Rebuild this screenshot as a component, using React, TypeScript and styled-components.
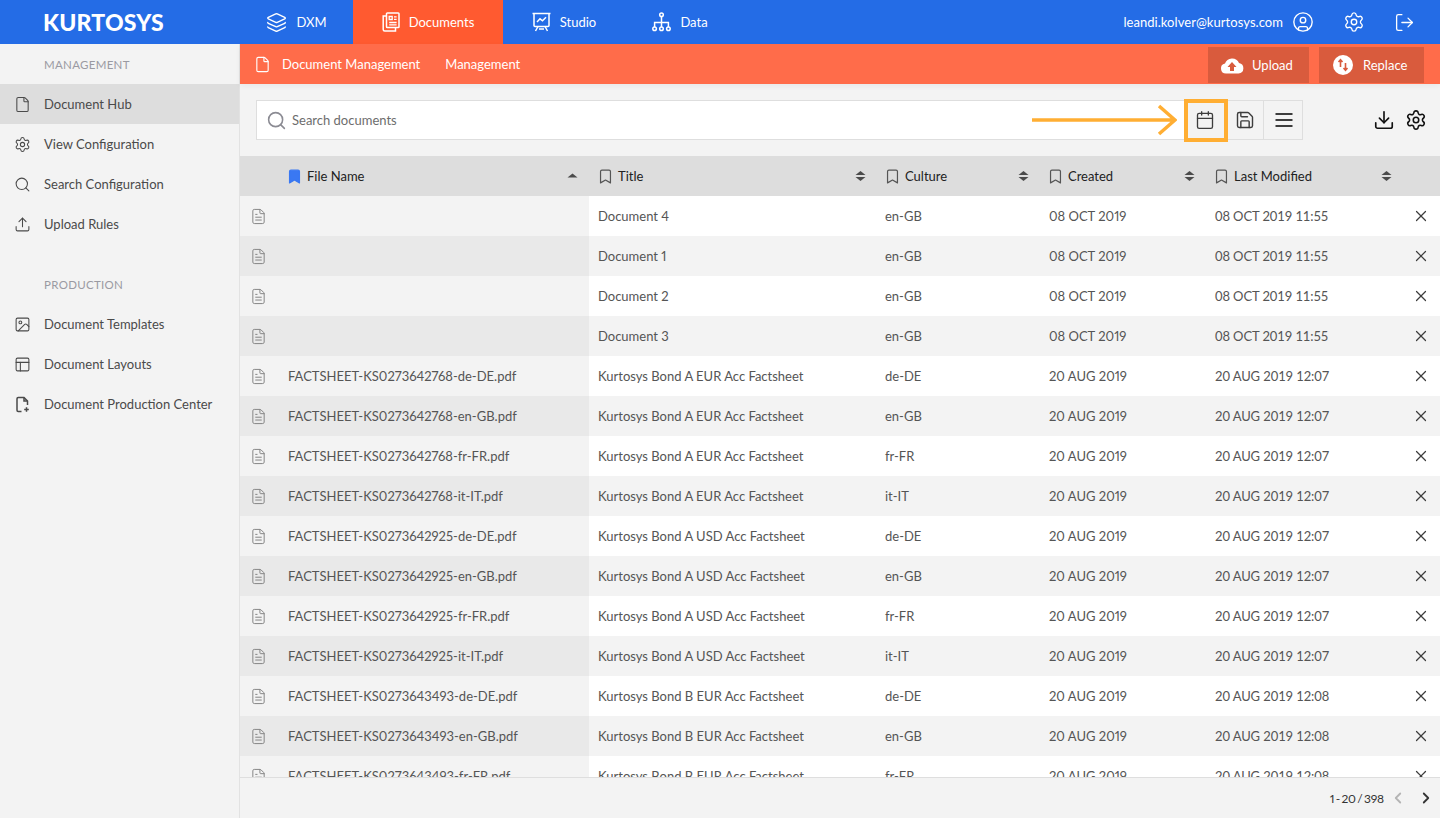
import styled, { createGlobalStyle } from "styled-components";
import {
  Bookmark,
  Calendar,
  ChevronLeft,
  ChevronRight,
  CircleUser,
  Download,
  File,
  FileText,
  Image,
  Layers,
  LogOut,
  PanelsTopLeft,
  Save,
  Search,
  Settings,
  Upload,
  X,
} from "lucide-react";

const GlobalStyle = createGlobalStyle`
  html, body, #root {
    margin: 0;
    height: 100%;
  }
  body {
    font-family: Lato, "Liberation Sans", sans-serif;
    font-size: 13px;
    font-variant-numeric: proportional-nums;
    overflow: hidden;
    background: #f3f3f3;
  }
  * {
    box-sizing: border-box;
  }
`;

const Page = styled.div`
  display: flex;
  flex-direction: column;
  height: 818px;
`;

const TopBar = styled.header`
  display: flex;
  align-items: center;
  height: 44px;
  flex-shrink: 0;
  background: #246ce6;
  color: #fff;
`;

const Logo = styled.div`
  width: 240px;
  padding-left: 43px;
  font-size: 23px;
  font-weight: 900;
  letter-spacing: 0.2px;
`;

const TopNav = styled.nav`
  display: flex;
  height: 100%;
`;

const TopNavItem = styled.div<{ $active?: boolean; $width: number }>`
  display: flex;
  align-items: center;
  justify-content: center;
  gap: 9px;
  width: ${(p) => p.$width}px;
  background: ${(p) => (p.$active ? "#ff5a30" : "transparent")};
`;

const UserArea = styled.div`
  display: flex;
  align-items: center;
  margin-left: auto;
  padding-right: 25px;
`;

const UserMail = styled.span`
  margin-right: 9px;
  letter-spacing: 0.05px;
`;

const UserIcons = styled.div`
  display: flex;
  align-items: center;
  gap: 29px;
`;

const Body = styled.div`
  display: flex;
  flex: 1;
  min-height: 0;
`;

const Sidebar = styled.aside`
  width: 240px;
  flex-shrink: 0;
  background: #f3f3f3;
  border-right: 1px solid #e2e2e2;
  color: #4a4a4a;
`;

const SideHeading = styled.div`
  height: 40px;
  padding-left: 44px;
  display: flex;
  align-items: center;
  font-size: 11.5px;
  letter-spacing: 0.3px;
  color: #9a9aa2;
`;

const SideGroup = styled.div`
  margin-bottom: 20px;
`;

const SideItem = styled.div<{ $active?: boolean }>`
  display: flex;
  align-items: center;
  height: 40px;
  padding-left: 14px;
  gap: 13px;
  background: ${(p) => (p.$active ? "#dddddd" : "transparent")};
`;

const Main = styled.main`
  flex: 1;
  min-width: 0;
  display: flex;
  flex-direction: column;
`;

const SubHeader = styled.div`
  position: relative;
  display: flex;
  align-items: center;
  height: 40px;
  flex-shrink: 0;
  padding: 0 16px 0 14px;
  background: #ff6c4a;
  color: #fff;
  box-shadow: 0 2px 6px rgba(0, 0, 0, 0.05);
`;

const SubLink = styled.span`
  margin-left: 25px;
  &:first-of-type {
    margin-left: 11px;
  }
`;

const SubActions = styled.div`
  display: flex;
  gap: 10px;
  margin-left: auto;
`;

const ActionButton = styled.button<{ $width: number; $pad: number }>`
  display: flex;
  align-items: center;
  gap: 8px;
  width: ${(p) => p.$width}px;
  height: 36px;
  margin-top: 2px;
  border: 0;
  padding: 0 0 0 ${(p) => p.$pad}px;
  background: #d95b3d;
  color: #fff;
  font: inherit;
`;

const Toolbar = styled.div`
  display: flex;
  align-items: center;
  height: 72px;
  flex-shrink: 0;
  padding: 0 13px 0 16px;
`;

const SearchBox = styled.div`
  position: relative;
  display: flex;
  align-items: center;
  gap: 5px;
  width: 928px;
  height: 40px;
  padding-left: 9px;
  background: #fff;
  border: 1px solid #dedede;
  border-right: 0;
  color: #6d6d6d;
`;

const ToolButtons = styled.div`
  position: relative;
  display: flex;
  height: 40px;
  border: 1px solid #dedede;
`;

const ToolButton = styled.div`
  display: flex;
  align-items: center;
  justify-content: center;
  width: 39px;
  padding-left: 1px;
  color: #3d3d3d;
  & + & {
    border-left: 1px solid #dedede;
  }
`;

const Highlight = styled.div`
  position: absolute;
  left: -1px;
  top: -2px;
  width: 44px;
  height: 43px;
  border: 4px solid #ffae33;
`;

const Arrow = styled.svg`
  position: absolute;
  right: 7px;
  top: 3px;
`;

const ToolEnd = styled.div`
  display: flex;
  align-items: center;
  gap: 10px;
  margin-left: auto;
  color: #111;
`;

const Table = styled.div`
  flex: 1;
  min-height: 0;
  overflow: hidden;
`;

const columns = "349px 288px 164px 165px 194px 40px";

const HeadRow = styled.div`
  display: grid;
  grid-template-columns: ${columns};
  height: 40px;
  background: #dddddd;
  color: #222;
`;

const HeadCell = styled.div<{ $pad: number; $sortRight: number }>`
  display: flex;
  align-items: center;
  gap: 4px;
  padding-left: ${(p) => p.$pad}px;
  padding-right: ${(p) => p.$sortRight}px;
`;

const SortMark = styled.svg`
  margin-left: auto;
  color: #4b4b4b;
`;

const Row = styled.div`
  display: grid;
  grid-template-columns: ${columns};
  height: 40px;
  color: #555;
  background: #fff;
  &:nth-child(even) {
    background: #f3f3f3;
  }
`;

const PinnedCell = styled.div`
  display: flex;
  align-items: center;
  gap: 21px;
  padding-left: 10px;
  background: #f3f3f3;
  ${Row}:nth-child(even) & {
    background: #e9e9e9;
  }
`;

const Cell = styled.div<{ $pad?: number }>`
  display: flex;
  align-items: center;
  padding-left: ${(p) => p.$pad ?? 9}px;
`;

const ModifiedCell = styled(Cell)`
  font-variant-numeric: tabular-nums;
  letter-spacing: -0.1px;
`;

const CloseCell = styled.div`
  display: flex;
  align-items: center;
  justify-content: flex-end;
  padding-right: 10px;
  color: #3d3d3d;
`;

const Footer = styled.footer`
  display: flex;
  align-items: center;
  justify-content: flex-end;
  gap: 5px;
  height: 41px;
  flex-shrink: 0;
  padding-right: 5px;
  border-top: 1px solid #dedede;
  background: #f3f3f3;
  color: #333;
  font-size: 12px;
  word-spacing: -1.5px;
  letter-spacing: -0.15px;
`;

const Pager = styled.div`
  display: flex;
  align-items: center;
  gap: 10px;
`;

const docs = [
  ["", "Document 4", "en-GB", "08 OCT 2019", "08 OCT 2019 11:55"],
  ["", "Document 1", "en-GB", "08 OCT 2019", "08 OCT 2019 11:55"],
  ["", "Document 2", "en-GB", "08 OCT 2019", "08 OCT 2019 11:55"],
  ["", "Document 3", "en-GB", "08 OCT 2019", "08 OCT 2019 11:55"],
  ...["de-DE", "en-GB", "fr-FR", "it-IT"].map((c) => [
    `FACTSHEET-KS0273642768-${c}.pdf`,
    "Kurtosys Bond A EUR Acc Factsheet",
    c,
    "20 AUG 2019",
    "20 AUG 2019 12:07",
  ]),
  ...["de-DE", "en-GB", "fr-FR", "it-IT"].map((c) => [
    `FACTSHEET-KS0273642925-${c}.pdf`,
    "Kurtosys Bond A USD Acc Factsheet",
    c,
    "20 AUG 2019",
    "20 AUG 2019 12:07",
  ]),
  ...["de-DE", "en-GB", "fr-FR"].map((c) => [
    `FACTSHEET-KS0273643493-${c}.pdf`,
    "Kurtosys Bond B EUR Acc Factsheet",
    c,
    "20 AUG 2019",
    "20 AUG 2019 12:08",
  ]),
];

const headers = [
  { label: "Title", pad: 8, sortRight: 11 },
  { label: "Culture", pad: 7, sortRight: 12 },
  { label: "Created", pad: 6, sortRight: 11 },
  { label: "Last Modified", pad: 7, sortRight: 8 },
];

const DocumentsIcon = () => (
  <svg width="18" height="20" viewBox="0 0 18 20" fill="none" stroke="currentColor" strokeWidth="1.5">
    <rect x="4.5" y="1" width="12.5" height="14.5" rx="0.8" />
    <path d="M4.5 4H1.2v13.5A1.5 1.5 0 0 0 2.7 19h10.8v-3.5" />
    <path d="M7.2 4.5h3v3h-3zM12 4.8h2.6M12 7.3h2.6M7.2 10.5h7.4M7.2 12.8h7.4" strokeWidth="1.3" />
  </svg>
);

const StudioIcon = () => (
  <svg width="19" height="20" viewBox="0 0 19 20" fill="none" stroke="currentColor" strokeWidth="1.5">
    <path d="M.5 1.5h18M2 1.5V13.5a1 1 0 0 0 1 1h13a1 1 0 0 0 1-1V1.5" />
    <path d="M5 10l3-3.2 2.5 2 3.5-3.5" />
    <path d="M6 14.5L3.5 19M13 14.5l2.5 4.5M7 17h5" />
  </svg>
);

const DataIcon = () => (
  <svg width="19" height="20" viewBox="0 0 19 20" fill="none" stroke="currentColor" strokeWidth="1.5">
    <circle cx="9.5" cy="2.8" r="1.8" />
    <circle cx="2.6" cy="16.8" r="1.8" />
    <circle cx="9.5" cy="16.8" r="1.8" />
    <circle cx="16.4" cy="16.8" r="1.8" />
    <path d="M9.5 4.6V15M2.6 15v-4.5h13.8V15" />
  </svg>
);

const UploadIcon = () => (
  <svg width="24" height="17" viewBox="0 0 24 17">
    <path
      fill="#fff"
      d="M6 16.5a5 5 0 0 1-1-9.9A7.5 7.5 0 0 1 19 6a5.3 5.3 0 0 1-.5 10.5z"
    />
    <path fill="#d95b3d" d="M12 5l4.5 5H14v4h-4v-4H7.5z" />
  </svg>
);

const ReplaceIcon = () => (
  <svg width="22" height="20" viewBox="0 0 22 20">
    <circle cx="10" cy="10" r="10" fill="#fff" />
    <path
      d="M7.5 5v7M5.5 7l2-2.2 2 2.2M12.5 15V8M10.5 13l2 2.2 2-2.2"
      fill="none"
      stroke="#d95b3d"
      strokeWidth="1.6"
    />
  </svg>
);

const ProductionIcon = () => (
  <svg width="17" height="17" viewBox="0 0 17 17" fill="none" stroke="currentColor" strokeWidth="1.5">
    <path d="M7.5 15.5H4.2A1.2 1.2 0 0 1 3 14.3V2.7a1.2 1.2 0 0 1 1.2-1.2H10L13.5 5v4" />
    <path d="M10 1.5V5h3.5M12.5 11.2v4.6M10.2 13.5h4.6" />
  </svg>
);

const MenuIcon = () => (
  <svg width="18" height="14" viewBox="0 0 18 14" fill="none" stroke="currentColor" strokeWidth="2">
    <path d="M.5 1h17M.5 7h17M.5 13h17" />
  </svg>
);

const Sort = ({ up }: { up?: boolean }) => (
  <SortMark width="11" height="12" viewBox="0 0 11 12" fill="currentColor">
    {up ? (
      <path d="M5.5 3.5L10.5 7.5H.5z" />
    ) : (
      <>
        <path d="M5.5 1L10.5 5H.5z" />
        <path d="M5.5 11L10.5 7H.5z" />
      </>
    )}
  </SortMark>
);

const App = () => {
  return (
    <Page>
      <GlobalStyle />
      <TopBar>
        <Logo>KURTOSYS</Logo>
        <TopNav>
          <TopNavItem $width={113}>
            <Layers size={21} strokeWidth={1.6} />
            DXM
          </TopNavItem>
          <TopNavItem $active $width={150}>
            <DocumentsIcon />
            Documents
          </TopNavItem>
          <TopNavItem $width={122}>
            <StudioIcon />
            Studio
          </TopNavItem>
          <TopNavItem $width={110}>
            <DataIcon />
            Data
          </TopNavItem>
        </TopNav>
        <UserArea>
          <UserMail>leandi.kolver@kurtosys.com</UserMail>
          <UserIcons>
            <CircleUser size={22} strokeWidth={1.5} />
            <Settings size={22} strokeWidth={1.5} />
            <LogOut size={21} strokeWidth={1.5} />
          </UserIcons>
        </UserArea>
      </TopBar>
      <Body>
        <Sidebar>
          <SideGroup>
            <SideHeading>MANAGEMENT</SideHeading>
            <SideItem $active>
              <File size={17} strokeWidth={1.5} />
              Document Hub
            </SideItem>
            <SideItem>
              <Settings size={17} strokeWidth={1.5} />
              View Configuration
            </SideItem>
            <SideItem>
              <Search size={17} strokeWidth={1.5} />
              Search Configuration
            </SideItem>
            <SideItem>
              <Upload size={17} strokeWidth={1.5} />
              Upload Rules
            </SideItem>
          </SideGroup>
          <SideGroup>
            <SideHeading>PRODUCTION</SideHeading>
            <SideItem>
              <Image size={17} strokeWidth={1.5} />
              Document Templates
            </SideItem>
            <SideItem>
              <PanelsTopLeft size={17} strokeWidth={1.5} />
              Document Layouts
            </SideItem>
            <SideItem>
              <ProductionIcon />
              Document Production Center
            </SideItem>
          </SideGroup>
        </Sidebar>
        <Main>
          <SubHeader>
            <File size={17} strokeWidth={1.6} />
            <SubLink>Document Management</SubLink>
            <SubLink>Management</SubLink>
            <SubActions>
              <ActionButton $width={101} $pad={12}>
                <UploadIcon />
                Upload
              </ActionButton>
              <ActionButton $width={105} $pad={14}>
                <ReplaceIcon />
                Replace
              </ActionButton>
            </SubActions>
          </SubHeader>
          <Toolbar>
            <SearchBox>
              <Search size={21} strokeWidth={1.8} color="#8b8b93" />
              Search documents
              <Arrow width="146" height="32" viewBox="0 0 146 32" fill="none" stroke="#ffae33" strokeWidth="3.5">
                <path d="M1 16h142M128 2l16 14-16 14" />
              </Arrow>
            </SearchBox>
            <ToolButtons>
              <ToolButton>
                <Calendar size={20} strokeWidth={1.6} />
              </ToolButton>
              <ToolButton>
                <Save size={20} strokeWidth={1.7} />
              </ToolButton>
              <ToolButton>
                <MenuIcon />
              </ToolButton>
              <Highlight />
            </ToolButtons>
            <ToolEnd>
              <Download size={22} strokeWidth={1.8} />
              <Settings size={22} strokeWidth={1.7} />
            </ToolEnd>
          </Toolbar>
          <HeadRow>
            <HeadCell $pad={46} $sortRight={11}>
              <Bookmark size={17} color="#3a78f2" fill="#3a78f2" strokeWidth={1.7} />
              File Name
              <Sort up />
            </HeadCell>
            {headers.map((h) => (
              <HeadCell key={h.label} $pad={h.pad} $sortRight={h.sortRight}>
                <Bookmark size={17} color="#555" strokeWidth={1.7} />
                {h.label}
                <Sort />
              </HeadCell>
            ))}
            <div />
          </HeadRow>
          <Table>
            {docs.map((doc, i) => (
              <Row key={i}>
                <PinnedCell>
                  <FileText size={17} color="#858585" strokeWidth={1.4} />
                  {doc[0]}
                </PinnedCell>
                <Cell>{doc[1]}</Cell>
                <Cell $pad={8}>{doc[2]}</Cell>
                <Cell $pad={8}>{doc[3]}</Cell>
                <ModifiedCell>{doc[4]}</ModifiedCell>
                <CloseCell>
                  <X size={18} strokeWidth={1.6} />
                </CloseCell>
              </Row>
            ))}
          </Table>
          <Footer>
            1 - 20 / 398
            <Pager>
              <ChevronLeft size={18} color="#b4b4b4" strokeWidth={2.4} />
              <ChevronRight size={18} color="#333" strokeWidth={2.4} />
            </Pager>
          </Footer>
        </Main>
      </Body>
    </Page>
  );
};

export default App;
